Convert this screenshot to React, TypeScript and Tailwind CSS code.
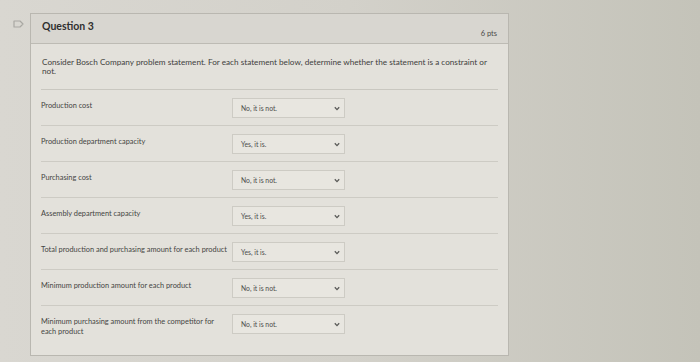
import React from "react";

const rows: { label: string; value: string; narrow?: boolean }[] = [
  { label: "Production cost", value: "No, it is not." },
  { label: "Production department capacity", value: "Yes, it is." },
  { label: "Purchasing cost", value: "No, it is not." },
  { label: "Assembly department capacity", value: "Yes, it is." },
  { label: "Total production and purchasing amount for each product", value: "Yes, it is." },
  { label: "Minimum production amount for each product", value: "No, it is not." },
  { label: "Minimum purchasing amount from the competitor for each product", value: "No, it is not.", narrow: true },
];

function Chevron() {
  return (
    <svg width="6" height="5" viewBox="0 0 6 5" className="shrink-0">
      <path d="M0.8 1.2 L3 3.6 L5.2 1.2" fill="none" stroke="#5a5a58" strokeWidth="1.3" />
    </svg>
  );
}

export default function App() {
  return (
    <div
      className="w-[700px] h-[362px] overflow-hidden bg-gradient-to-r from-[#d9d7d1] via-[#d3d1ca] to-[#c4c3b9] flex pt-[13px]"
      style={{ fontFamily: "Lato, 'Open Sans', sans-serif" }}
    >
      <div className="w-[30px] flex justify-center pt-[7px] pl-[6px]">
        <svg width="11" height="8" viewBox="0 0 11 8">
          <path d="M1 1 H7 L10 4 L7 7 H1 Z" fill="none" stroke="#a9a8a3" strokeWidth="1.2" strokeLinejoin="round" />
        </svg>
      </div>
      <div className="w-[479px] h-[343px] border border-[#b9b7b0] bg-[#e3e1db] flex flex-col">
        <div className="h-[30px] bg-[#d8d6d0] border-b border-[#bdbbb4] flex justify-between px-[11px]">
          <div className="pt-[5px] text-[10.5px] font-bold text-[#2f2f2f]">Question 3</div>
          <div className="pt-[14px] text-[7.5px] text-[#4a4a48]">6 pts</div>
        </div>
        <div className="px-[10px] pt-[14px]">
          <p className="text-[8.2px] leading-[9px] text-[#3f3f3d] pl-[1px] pr-[2px]">
            Consider Bosch Company problem statement. For each statement below, determine whether the statement is a constraint or not.
          </p>
          <div className="mt-[13px] border-t border-[#c9c7c0]">
            {rows.map((r, i) => (
              <div
                key={i}
                className={`flex items-start h-[36px] pt-[8px] ${i < rows.length - 1 ? "border-b border-[#cdcbc4]" : ""}`}
              >
                <div className={`w-[191px] pt-[3px] text-[7.4px] leading-[10px] text-[#454543] ${r.narrow ? "pr-[12px]" : ""}`}>
                  {r.label}
                </div>
                <div className="w-[113px] h-[20px] border border-[#cdcbc4] bg-[#e8e6e0] flex items-center justify-between pl-[8px] pr-[4px]">
                  <span className="text-[6.8px] text-[#4d4d4b]">{r.value}</span>
                  <Chevron />
                </div>
              </div>
            ))}
          </div>
        </div>
      </div>
    </div>
  );
}
